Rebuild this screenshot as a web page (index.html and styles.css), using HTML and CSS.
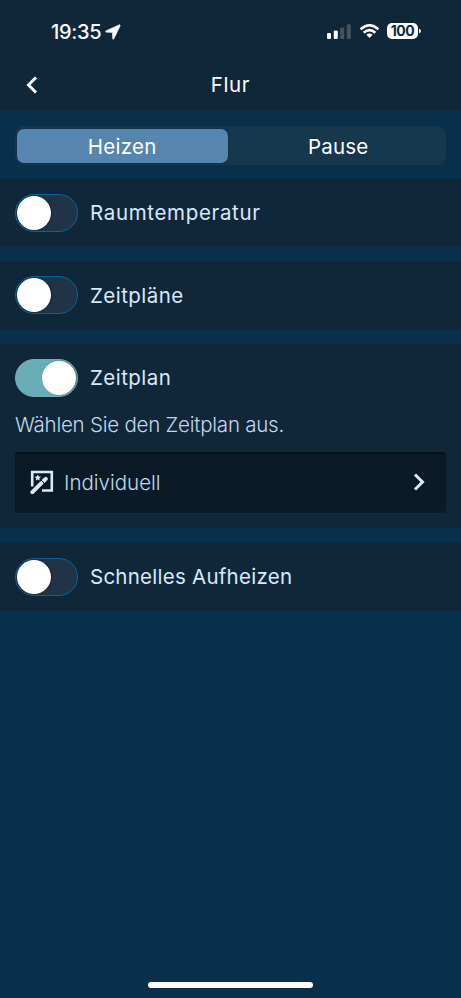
FILE: index.html
```html
<!DOCTYPE html>
<html lang="de">
<head>
<meta charset="utf-8">
<meta name="viewport" content="width=device-width, initial-scale=1">
<title>Flur</title>
<link rel="stylesheet" href="styles.css">
</head>
<body>
<div class="screen">
  <header class="header">
    <div class="status">
      <div class="clock">
        <span class="time">19:35</span>
        <svg class="location" viewBox="0 0 16 16" width="16" height="16"><path d="M13.800.9 1.100 6.800C.3 7.200.4 8.200 1.300 8.200L7.400 8.400 7.600 14.500C7.600 15.500 8.500 15.600 8.900 14.800L15 2.200C15.500 1.100 14.900.4 13.800.9Z" fill="#fff" stroke="#fff" stroke-width=".5"/></svg>
      </div>
      <div class="indicators">
        <svg class="signal" viewBox="0 0 24 16" width="24" height="16"><rect x="0" y="10" width="4" height="6" rx="1" fill="#fff"/><rect x="6.800" y="7.500" width="4" height="8.500" rx="1" fill="#fff"/><rect x="13.200" y="4.500" width="4" height="11.500" rx="1" fill="#46535f"/><rect x="19.800" y="1.200" width="4" height="14.800" rx="1" fill="#46535f"/></svg>
        <svg class="wifi" viewBox="0 0 22 16" width="21" height="16"><g fill="none" stroke="#fff" stroke-width="2.700"><path d="M1.700 6.200Q11-2.200 20.300 6.200"/><path d="M4.900 9.800Q11 4.200 17.100 9.800"/></g><path d="M7.700 12Q11 9 14.300 12L11 15.300Z" fill="#fff"/></svg>
        <div class="battery"><span class="level">100</span></div>
        <svg class="tip" viewBox="0 0 3 6" width="3" height="6"><path d="M0 .5Q4 3 0 5.500Z" fill="#fff"/></svg>
      </div>
    </div>
    <div class="navbar">
      <svg class="back" viewBox="0 0 12 18" width="12" height="18"><path d="M10 1.500 2.500 9 10 16.500" fill="none" stroke="#fff" stroke-width="3"/></svg>
      <h1 class="title">Flur</h1>
    </div>
  </header>
  <div class="tabs">
    <div class="segmented">
      <div class="segment active"><span class="heizen">Heizen</span></div>
      <div class="segment"><span class="pause">Pause</span></div>
    </div>
  </div>
  <main class="sections">
    <section class="section"><div class="row"><div class="toggle"><i class="knob"></i></div><span class="label raum">Raumtemperatur</span></div></section>
    <section class="section"><div class="row"><div class="toggle"><i class="knob"></i></div><span class="label plan">Zeitpläne</span></div></section>
    <section class="section">
      <div class="row"><div class="toggle on"><i class="knob"></i></div><span class="label plan">Zeitplan</span></div>
      <p class="hint">Wählen Sie den Zeitplan aus.</p>
      <div class="select">
        <svg class="wand" viewBox="0 0 24 24" width="24" height="24"><path d="M2.200 16.500V2H21.800V20.500H12" fill="none" stroke="#d8e9fb" stroke-width="2.600"/><path d="M2.400 22.200 11.400 13.200M13.600 11 15.800 8.800" fill="none" stroke="#d8e9fb" stroke-width="4" stroke-linecap="round"/><path d="m10.800 9.800 3.900 3.900" stroke="#0a1b27" stroke-width="1"/><path d="m7.800 4.400 1 2.100 2.300.2-1.800 1.600.5 2.300-2-1.200-2 1.200.5-2.300-1.800-1.600 2.300-.2Z" fill="#d8e9fb"/></svg>
        <span class="value">Individuell</span>
        <svg class="chevron" viewBox="0 0 12 18" width="12" height="18"><path d="M2 1.500 9.500 9 2 16.500" fill="none" stroke="#d8e9fb" stroke-width="3"/></svg>
      </div>
    </section>
    <section class="section"><div class="row"><div class="toggle"><i class="knob"></i></div><span class="label schnell">Schnelles Aufheizen</span></div></section>
  </main>
  <div class="home"></div>
</div>
</body>
</html>
```
FILE: styles.css
```css
* { box-sizing: border-box; }
body { margin: 0; background: #08304b; font-family: Inter, "Liberation Sans", sans-serif; color: #fff; }
.screen { width: 461px; height: 998px; display: flex; flex-direction: column; background: #08304b; overflow: hidden; }
.header { height: 111px; background: #10273a; flex: none; }
.status { height: 58px; padding: 22px 40px 0 51px; display: flex; justify-content: space-between; }
.clock { display: flex; height: 19px; align-items: center; }
.time { width: 51px; font-size: 20px; font-weight: 500; letter-spacing: -0.3px; line-height: 18px; }
.location { margin-left: 3px; }
.indicators { display: flex; height: 18px; align-items: center; }
.signal { margin-right: 0.5px; }
.wifi { margin-left: 7.5px; }
.battery { width: 31px; height: 16px; border-radius: 5px; background: #fff; margin-left: 7px; display: flex; align-items: center; justify-content: center; }
.level { color: #10273a; font-size: 14px; font-weight: 700; line-height: 16px; letter-spacing: -0.5px; }
.tip { margin-left: 0.5px; margin-right: -0.5px; }
.navbar { height: 53px; display: grid; grid-template-columns: 26px 1fr 26px; padding: 0 24px 0 26px; align-items: center; }
.title { margin: 0; padding-right: 2px; text-align: center; font-size: 20.5px; font-weight: 400; letter-spacing: 0.6px; line-height: 28px; }
.tabs { height: 68px; padding: 15px 15px 0; flex: none; }
.segmented { height: 39px; border-radius: 9px; background: #17374d; padding: 3px 2px; display: flex; }
.segment { flex: 0 0 210.5px; height: 34px; display: flex; align-items: center; justify-content: center; border-radius: 7px; font-size: 20.5px; letter-spacing: 0.3px; }
.segment + .segment { flex: 1; padding-left: 5px; letter-spacing: 0.2px; }
.active { background: #5685b0; box-shadow: 0 0 2px rgba(15, 35, 52, 0.7); }
.sections { display: flex; flex-direction: column; gap: 14.5px; }
.section { background: #10273a; padding: 15px; }
.row { height: 37.9px; display: flex; align-items: center; gap: 12.5px; }
.toggle { width: 62.5px; height: 38px; border: 1px solid #07659b; border-radius: 19px; background: #213346; padding: 1px; display: flex; flex: none; }
.knob { width: 34px; height: 34px; border-radius: 50%; background: #fff; box-shadow: 1px 0 2px rgba(0, 0, 0, 0.35); }
.on { background: #69aeb7; border-color: #78adb5; justify-content: flex-end; }
.label { font-size: 20.5px; color: #d8e9fb; white-space: nowrap; }
.raum { letter-spacing: 0.66px; }
.plan { letter-spacing: 0.45px; }
.schnell { letter-spacing: 0.25px; }
.hint { margin: 14px 0 0; height: 28px; line-height: 28px; font-size: 20.5px; font-weight: 300; color: #c5d7ec; letter-spacing: -0.23px; white-space: nowrap; }
.select { height: 61.5px; margin-top: 13px; padding: 0 21px 0 15px; background: #0a1b27; border-radius: 4px; box-shadow: inset 0 2px 1px rgba(0, 0, 0, 0.4), 0 1px 1px #152c3e; display: flex; align-items: center; }
.value { margin-left: 10px; flex: 1; font-size: 20.5px; font-weight: 300; color: #c5d7ec; }
.home { width: 165px; height: 6px; margin: auto auto 10px; border-radius: 3px; background: #fff; flex: none; }
```
